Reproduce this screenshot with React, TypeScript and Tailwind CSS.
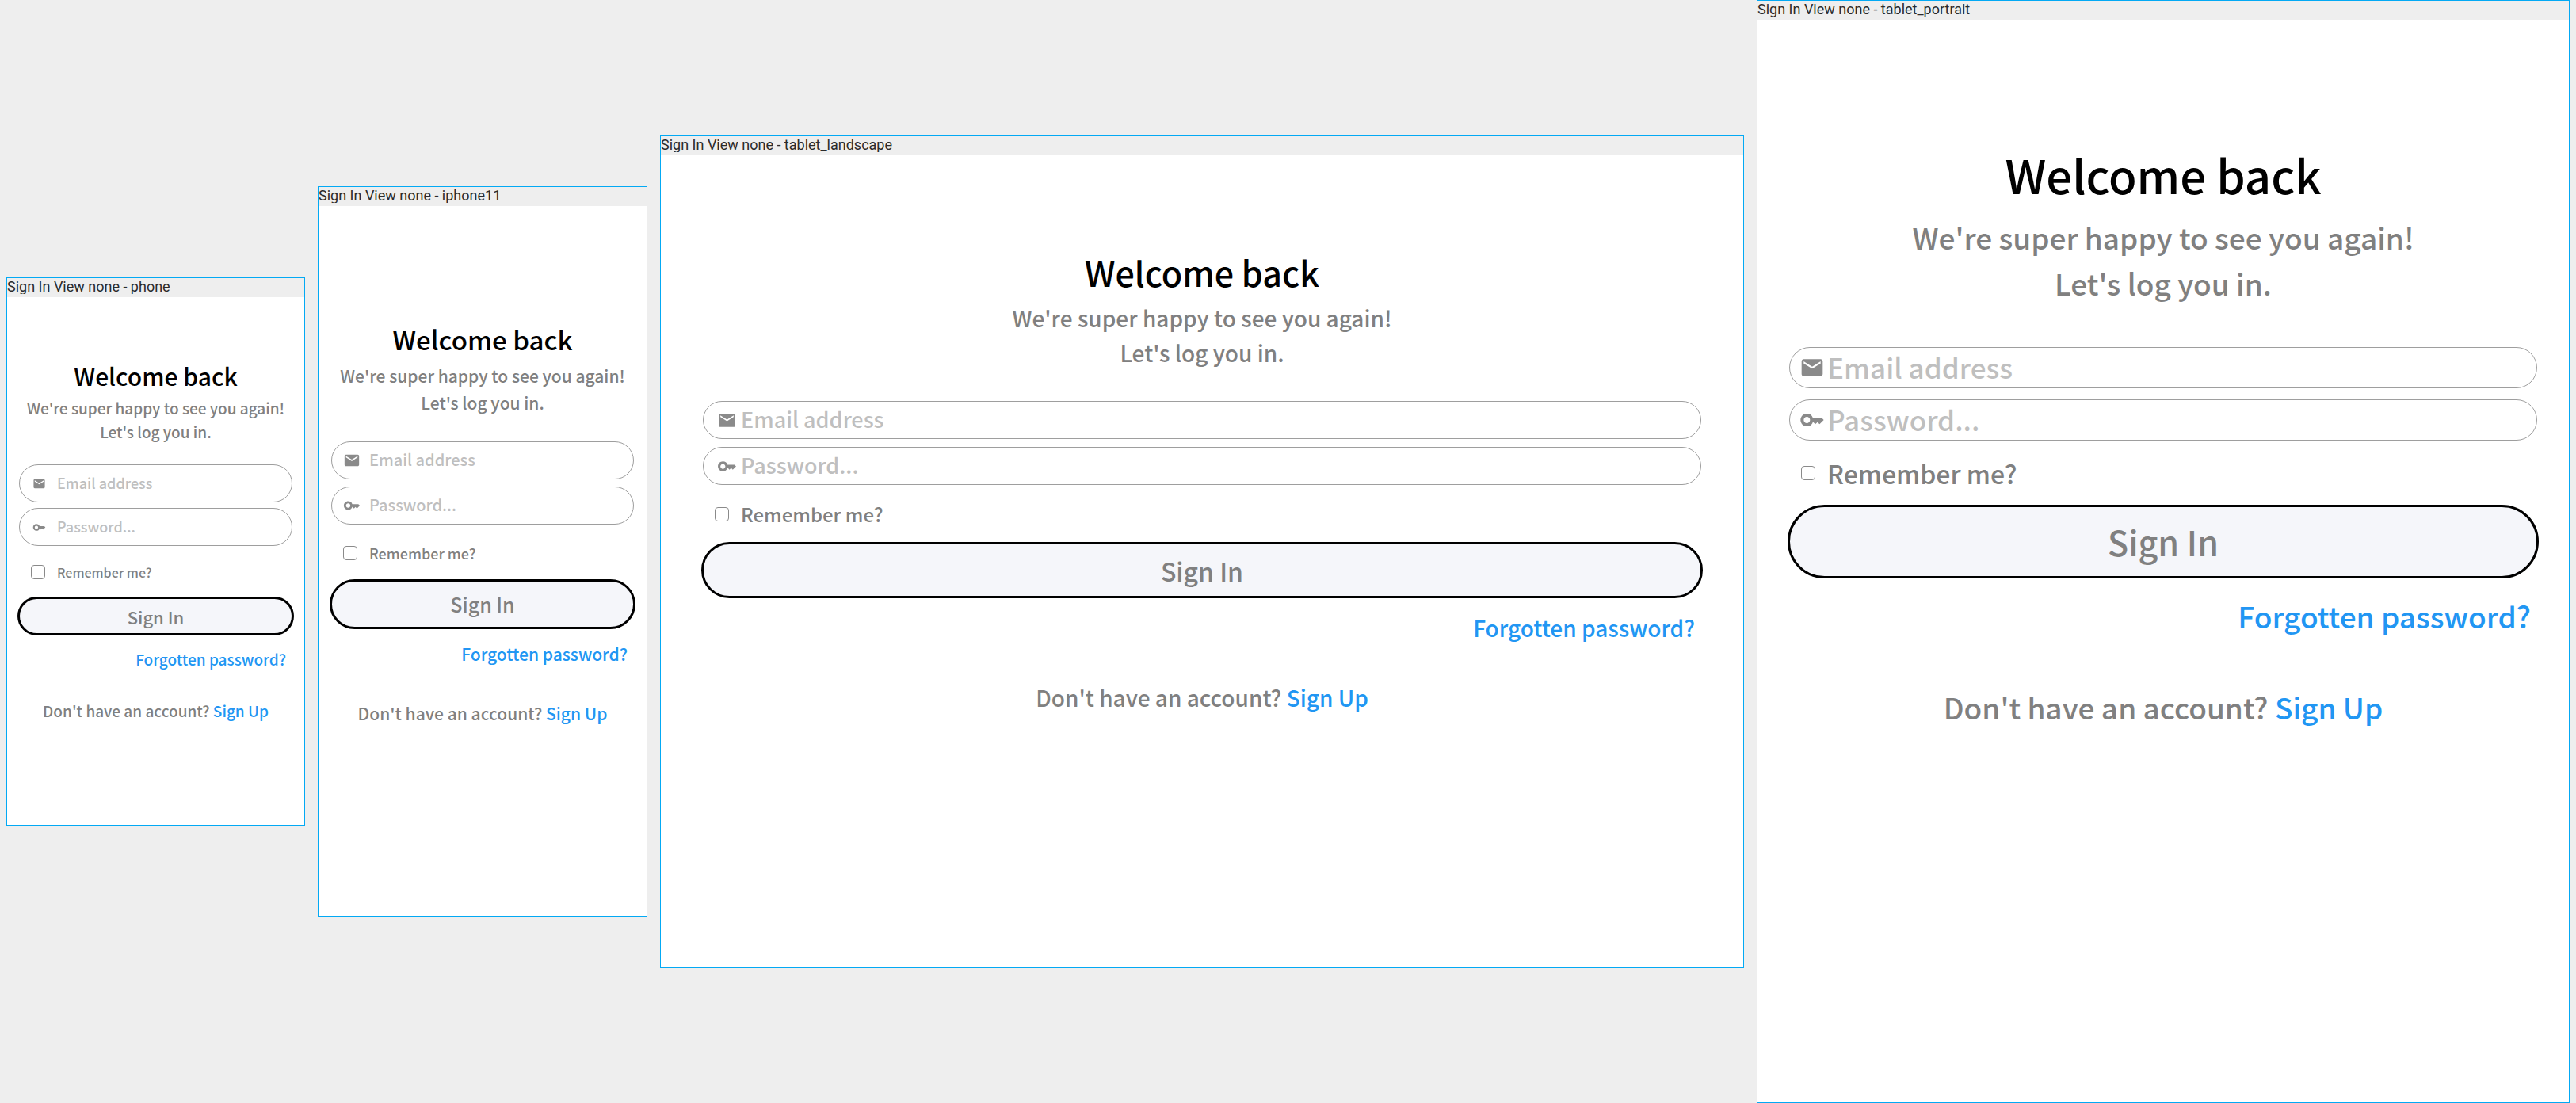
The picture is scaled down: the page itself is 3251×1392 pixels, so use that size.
import { MdEmail, MdKey } from 'react-icons/md';
import type { IconType } from 'react-icons';

type Device = {
  name: string;
  frame: string;
  body: string;
  title: string;
  text: string;
  intro: string;
  fields: string;
  field: string;
  iconSlot: string;
  icon: string;
  remember: string;
  button: string;
  forgot: string;
  signUp: string;
};

const devices: Device[] = [
  {
    name: 'phone',
    frame: 'min-h-[692px]',
    body: 'px-[13px] pt-[79px]',
    title: 'text-[30px] leading-[40px]',
    text: 'text-[19px] leading-[30px]',
    intro: 'mt-1.5',
    fields: 'mt-[26px] gap-[7px]',
    field: 'h-12 text-lg',
    iconSlot: 'pr-[14px]',
    icon: 'size-[17px]',
    remember: 'mt-[21px] text-base leading-6',
    button: 'mt-[19px] h-[49px] text-[22px]',
    forgot: 'mt-[15px]',
    signUp: 'mt-[35px]',
  },
  {
    name: 'iphone11',
    frame: 'min-h-[922px]',
    body: 'px-[14px] pt-[146px]',
    title: 'text-[33px] leading-[44px]',
    text: 'text-[21px] leading-[34px]',
    intro: 'mt-[7px]',
    fields: 'mt-8 gap-[9px]',
    field: 'h-12 text-xl',
    iconSlot: 'pr-[11px]',
    icon: 'size-[22px]',
    remember: 'mt-6 text-lg leading-6',
    button: 'mt-[21px] h-[63px] text-[25px]',
    forgot: 'mt-[14px]',
    signUp: 'mt-[41px]',
  },
  {
    name: 'tablet_landscape',
    frame: 'min-h-[1050px]',
    body: 'px-[51px] pt-[119px]',
    title: 'text-[43px] leading-[56px]',
    text: 'text-[28px] leading-[44px]',
    intro: 'mt-2',
    fields: 'mt-[39px] gap-2.5',
    field: 'h-12 text-[27px]',
    iconSlot: 'pr-[5px]',
    icon: 'size-[25px]',
    remember: 'mt-[21px] text-2xl leading-8',
    button: 'mt-[19px] h-[71px] text-[32px]',
    forgot: 'mt-[15px]',
    signUp: 'mt-11',
  },
  {
    name: 'tablet_portrait',
    frame: 'min-h-[1392px]',
    body: 'px-[38px] pt-[157px]',
    title: 'text-[58px] leading-[76px]',
    text: 'text-[37px] leading-[58px]',
    intro: 'mt-3',
    fields: 'mt-[52px] gap-[14px]',
    field: 'h-[52px] text-[35px]',
    iconSlot: 'pr-[3px]',
    icon: 'size-8',
    remember: 'mt-5 text-[32px] leading-[42px]',
    button: 'mt-[19px] h-[93px] text-[43px]',
    forgot: 'mt-[18px]',
    signUp: 'mt-[57px]',
  },
];

function Field({
  device,
  type,
  label,
  placeholder,
  Icon,
}: {
  device: Device;
  type: string;
  label: string;
  placeholder: string;
  Icon: IconType;
}) {
  return (
    <label className={`flex items-center rounded-full border border-[#9e9e9e] text-[#8a8a8a] ${device.field}`}>
      <span className={`flex w-[47px] shrink-0 justify-end ${device.iconSlot}`}>
        <Icon className={device.icon} aria-hidden="true" />
      </span>
      <input
        type={type}
        aria-label={label}
        placeholder={placeholder}
        className="h-full min-w-0 flex-1 rounded-r-full bg-transparent pr-5 pb-[3px] outline-none placeholder:text-[#bfbfbf]"
      />
    </label>
  );
}

function SignInView({ device }: { device: Device }) {
  return (
    <section className={`flex min-w-0 flex-col border border-[#03a9f4] bg-white ${device.frame}`}>
      <header className="h-6 shrink-0 bg-[#eeeeee]">
        <p className="h-5 overflow-hidden font-['Roboto',sans-serif] text-lg leading-[22px] font-normal whitespace-nowrap text-[#2b2b2b]">
          Sign In View none - {device.name}
        </p>
      </header>
      <form className={`flex flex-col ${device.body}`} onSubmit={(e) => e.preventDefault()}>
        <h1 className={`text-center text-black ${device.title}`}>Welcome back</h1>
        <p className={`text-center ${device.text} ${device.intro}`}>
          We're super happy to see you again!
          <br />
          Let's log you in.
        </p>
        <div className={`mx-0.5 flex flex-col ${device.fields}`}>
          <Field device={device} type="email" label="Email address" placeholder="Email address" Icon={MdEmail} />
          <Field device={device} type="password" label="Password" placeholder="Password..." Icon={MdKey} />
        </div>
        <label className={`flex items-center gap-[15px] self-start pl-[17px] ${device.remember}`}>
          <input
            type="checkbox"
            className="size-[18px] shrink-0 appearance-none rounded border border-[#8a8a8a] bg-white checked:bg-[#2196f3]"
          />
          Remember me?
        </label>
        <button
          type="submit"
          className={`rounded-full border-3 border-black bg-[#f5f6fa] leading-none ${device.button}`}
        >
          Sign In
        </button>
        <a href="#forgotten" className={`mr-2.5 self-end text-[#2196f3] ${device.text} ${device.forgot}`}>
          Forgotten password?
        </a>
        <p className={`text-center ${device.text} ${device.signUp}`}>
          Don't have an account?{' '}
          <a href="#sign-up" className="text-[#2196f3]">
            Sign Up
          </a>
        </p>
      </form>
    </section>
  );
}

export default function App() {
  return (
    <main className="grid min-h-screen grid-cols-[377fr_416fr_1368fr_1026fr] items-center gap-4 bg-[#eeeeee] px-2 font-['Noto_Sans_CJK_SC',sans-serif] font-medium text-[#808080]">
      {devices.map((device) => (
        <SignInView key={device.name} device={device} />
      ))}
    </main>
  );
}
